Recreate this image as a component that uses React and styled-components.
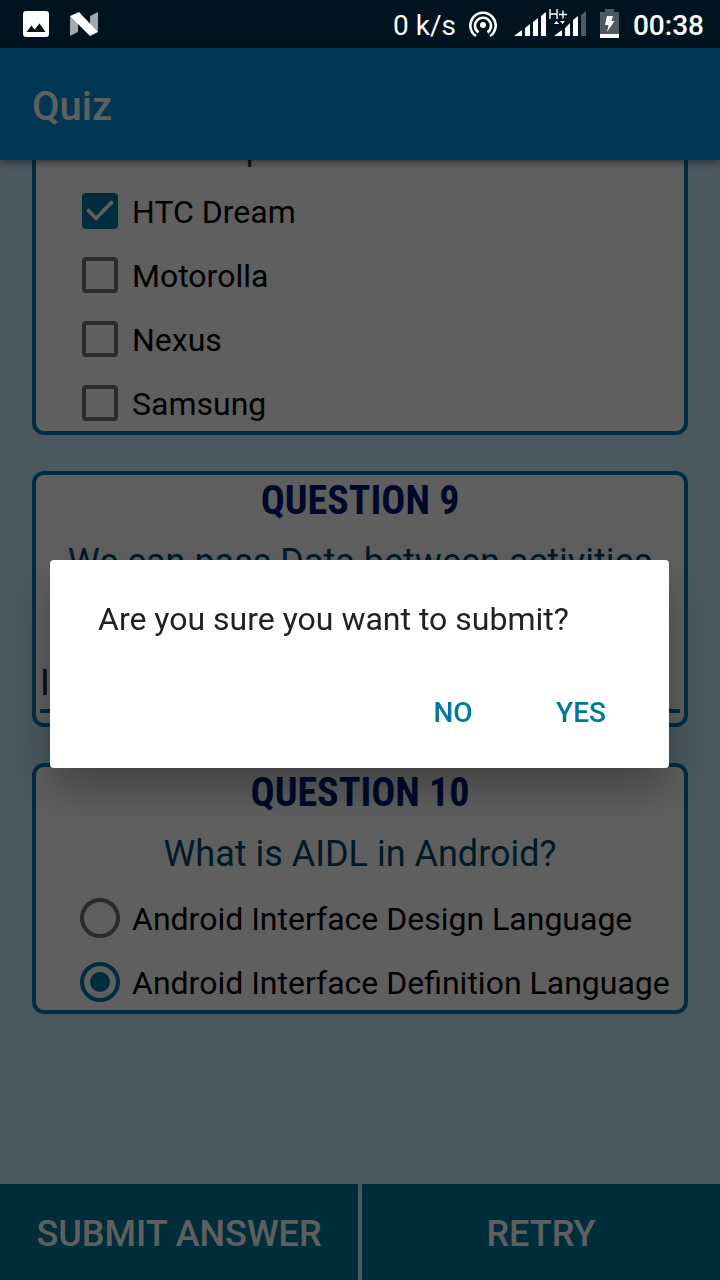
import React from "react";
import styled, { createGlobalStyle } from "styled-components";

const GlobalStyle = createGlobalStyle`
  *, *::before, *::after { box-sizing: border-box; }
  html, body, #root { height: 100%; }
  body {
    margin: 0;
    font-family: Roboto, "Liberation Sans", sans-serif;
    background: #c9ecff;
    overflow: hidden;
  }
  h1, h2, p { margin: 0; }
  button, input { font: inherit; }
`;

const Screen = styled.div`
  display: flex;
  flex-direction: column;
  height: 100vh;
`;

const StatusBar = styled.header`
  display: flex;
  align-items: center;
  flex: none;
  height: 48px;
  padding: 0 16px 0 23px;
  background: #00131e;
  color: #fff;
  font-size: 28px;
  line-height: 44px;
  white-space: nowrap;

  svg { display: block; flex: none; }
`;

const Notifications = styled.div`
  display: flex;
  align-items: center;
  gap: 21px;
  flex: 1;
`;

const SystemIcons = styled.div`
  display: flex;
  align-items: center;
  gap: 13px;
`;

const Rate = styled.span`
  padding-top: 4px;
`;

const Clock = styled.time`
  padding-top: 4px;
  font-weight: 500;
`;

const AppBar = styled.div`
  display: flex;
  align-items: center;
  flex: none;
  height: 112px;
  padding: 6px 32px 0;
  background: #0092dc;
  box-shadow: 0 2px 8px rgba(0, 0, 0, 0.5);
  z-index: 1;
`;

const AppTitle = styled.h1`
  color: #fff;
  font-size: 40px;
  font-weight: 500;
  line-height: 48px;
`;

const ScrollArea = styled.main`
  display: flex;
  flex-direction: column-reverse;
  flex: 1;
  min-height: 0;
  overflow-y: auto;
  scrollbar-width: none;
`;

const Questions = styled.div`
  display: flex;
  flex-direction: column;
  gap: 36px;
  padding: 36px 32px 170px;
`;

const Card = styled.section`
  padding-top: 6px;
  border-radius: 12px;
  background: #fff;
  box-shadow: inset 0 0 0 4px #0079b0;
`;

const QuestionTitle = styled.h2`
  color: #001a75;
  font-family: "Roboto Condensed", "Liberation Sans Narrow", Roboto, sans-serif;
  font-size: 40px;
  font-weight: 700;
  line-height: 47px;
  text-align: center;
`;

const QuestionText = styled.p`
  padding: 17px 16px 11px;
  color: #004666;
  font-size: 36px;
  line-height: 42px;
  text-align: center;
`;

const Option = styled.label`
  display: grid;
  grid-template-columns: 64px 1fr;
  align-items: center;
  height: 64px;
  padding-left: 36px;
  color: #000;
  font-size: 32px;
  line-height: 40px;
  white-space: nowrap;
`;

const OptionText = styled.span`
  padding-top: 2px;
`;

const Control = styled.span`
  display: grid;
  place-items: center;

  > * { grid-area: 1 / 1; }
  svg { pointer-events: none; }
`;

const CheckInput = styled.input`
  appearance: none;
  width: 36px;
  height: 36px;
  margin: 0;
  border: 4px solid #757575;
  border-radius: 4px;

  &:checked {
    border-color: #00789d;
    background: #00789d;
  }
`;

const RadioInput = styled.input`
  appearance: none;
  display: grid;
  place-items: center;
  width: 40px;
  height: 40px;
  margin: 0;
  border: 4px solid #757575;
  border-radius: 50%;

  &:checked { border-color: #00789d; }
  &:checked::before {
    content: "";
    width: 20px;
    height: 20px;
    border-radius: 50%;
    background: #00789d;
  }
`;

const AnswerField = styled.div`
  padding: 0 8px 14px;
`;

const AnswerInput = styled.input`
  display: block;
  width: 100%;
  height: 77px;
  padding: 20px 0 0;
  border: 0;
  border-bottom: 4px solid #00789d;
  border-radius: 0;
  background: none;
  color: #212121;
  font-size: 36px;
  outline: none;
`;

const BottomBar = styled.footer`
  display: grid;
  grid-template-columns: 1fr 1fr;
  gap: 4px;
  flex: none;
  height: 96px;
`;

const BottomButton = styled.button`
  padding: 4px 0 0;
  border: 0;
  background: #00789d;
  color: #fff;
  font-size: 36px;
  font-weight: 500;
`;

const Scrim = styled.div`
  position: fixed;
  inset: 48px 0 0;
  display: flex;
  align-items: center;
  padding: 0 51px 0 50px;
  background: rgba(0, 0, 0, 0.627);
  z-index: 2;
`;

const Dialog = styled.div`
  width: 100%;
  padding: 36px 24px 18px;
  border-radius: 4px;
  background: #fff;
  box-shadow: 0 22px 44px rgba(0, 0, 0, 0.3);
`;

const DialogMessage = styled.p`
  padding: 0 24px;
  color: #212121;
  font-size: 32px;
  line-height: 46px;
`;

const DialogActions = styled.div`
  display: flex;
  justify-content: flex-end;
  padding-top: 32px;
`;

const DialogButton = styled.button`
  width: 128px;
  height: 76px;
  padding: 0;
  border: 0;
  background: none;
  color: #00789d;
  font-size: 28px;
  font-weight: 500;
`;

function PictureIcon() {
  return (
    <svg width="26" height="26" viewBox="0 0 26 26" aria-hidden="true">
      <rect width="26" height="26" rx="3" fill="#fff" />
      <path d="M3.500 21 8.500 14.500 11.500 18.500 16.500 12.500 22.500 21z" fill="#00131e" />
    </svg>
  );
}

function NougatIcon() {
  return (
    <svg width="28" height="24" viewBox="0 0 28 24" aria-hidden="true">
      <path d="M0 4 8 10V20L0 24zM20 4 28 0V20L20 13z" fill="#a2a8ac" />
      <path d="M0 4 9 0 28 20 20 24z" fill="#fff" />
    </svg>
  );
}

function HotspotIcon() {
  return (
    <svg width="28" height="28" viewBox="0 0 28 28" fill="none" stroke="#fff" strokeWidth="2.6" aria-hidden="true">
      <circle cx="14" cy="15" r="3" fill="#fff" stroke="none" />
      <path d="M9.500 22.400A8 8 0 1 1 18.500 22.400" />
      <path d="M7 26A12.700 12.700 0 1 1 21 26" />
    </svg>
  );
}

function SignalIcon() {
  return (
    <svg width="77" height="32" viewBox="-4 0 77 32" fill="#fff" aria-hidden="true">
      <path d="M0 28 8 22V28zM11 20 16 16V28H11zM19 14 24 10V28H19zM27 8 32 4V28H27z" />
      <path d="M40 28 48 22V28zM51 20 56 15V28H51zM59 12 64 8V28H59z" />
      <path d="M67 7 72 3V28H67z" fill="#4d5a62" />
      <path d="M36 1V11M43 1V11M36 6H43M45 6.500H53M49 2.500V10.500" stroke="#fff" strokeWidth="1.4" />
      <path d="M40 16 42.500 13 45 16zM46 13H51L48.500 16z" />
    </svg>
  );
}

function BatteryIcon() {
  return (
    <svg width="20" height="30" viewBox="0 0 20 30" aria-hidden="true">
      <path d="M0 3H5V0H14V3H19V26H0z" fill="#4d5a62" />
      <path d="M0 25H19V29H0zM7 7H13L11.500 12H14.500L7 23 8.500 16H5z" fill="#fff" />
    </svg>
  );
}

function CheckOption({ children, defaultChecked }) {
  return (
    <Option>
      <Control>
        <CheckInput type="checkbox" defaultChecked={defaultChecked} />
        {defaultChecked && (
          <svg width="36" height="36" viewBox="0 0 36 36" fill="none" stroke="#fff" strokeWidth="3.6" aria-hidden="true">
            <path d="M5.500 16.500 14 25.500 30.500 8.500" />
          </svg>
        )}
      </Control>
      <OptionText>{children}</OptionText>
    </Option>
  );
}

function RadioOption({ children, name, defaultChecked }) {
  return (
    <Option>
      <Control>
        <RadioInput type="radio" name={name} defaultChecked={defaultChecked} />
      </Control>
      <OptionText>{children}</OptionText>
    </Option>
  );
}

export default function App() {
  return (
    <>
      <GlobalStyle />
      <Screen>
        <StatusBar>
          <Notifications>
            <PictureIcon />
            <NougatIcon />
          </Notifications>
          <SystemIcons>
            <Rate>0 k/s</Rate>
            <HotspotIcon />
            <SignalIcon />
            <BatteryIcon />
            <Clock>00:38</Clock>
          </SystemIcons>
        </StatusBar>
        <AppBar>
          <AppTitle>Quiz</AppTitle>
        </AppBar>
        <ScrollArea>
          <Questions>
            <Card>
              <QuestionTitle>QUESTION 8</QuestionTitle>
              <QuestionText>
                Which was the first Android
                <br />
                phone device?
              </QuestionText>
              <CheckOption defaultChecked>HTC Dream</CheckOption>
              <CheckOption>Motorolla</CheckOption>
              <CheckOption>Nexus</CheckOption>
              <CheckOption>Samsung</CheckOption>
            </Card>
            <Card>
              <QuestionTitle>QUESTION 9</QuestionTitle>
              <QuestionText id="question-9">We can pass Data between activities using?</QuestionText>
              <AnswerField>
                <AnswerInput type="text" defaultValue="Intent" aria-labelledby="question-9" />
              </AnswerField>
            </Card>
            <Card>
              <QuestionTitle>QUESTION 10</QuestionTitle>
              <QuestionText>What is AIDL in Android?</QuestionText>
              <RadioOption name="aidl">Android Interface Design Language</RadioOption>
              <RadioOption name="aidl" defaultChecked>
                Android Interface Definition Language
              </RadioOption>
            </Card>
          </Questions>
        </ScrollArea>
        <BottomBar>
          <BottomButton type="button">SUBMIT ANSWER</BottomButton>
          <BottomButton type="button">RETRY</BottomButton>
        </BottomBar>
      </Screen>
      <Scrim>
        <Dialog role="alertdialog" aria-modal="true" aria-describedby="confirm-message">
          <DialogMessage id="confirm-message">Are you sure you want to submit?</DialogMessage>
          <DialogActions>
            <DialogButton type="button">NO</DialogButton>
            <DialogButton type="button">YES</DialogButton>
          </DialogActions>
        </Dialog>
      </Scrim>
    </>
  );
}
